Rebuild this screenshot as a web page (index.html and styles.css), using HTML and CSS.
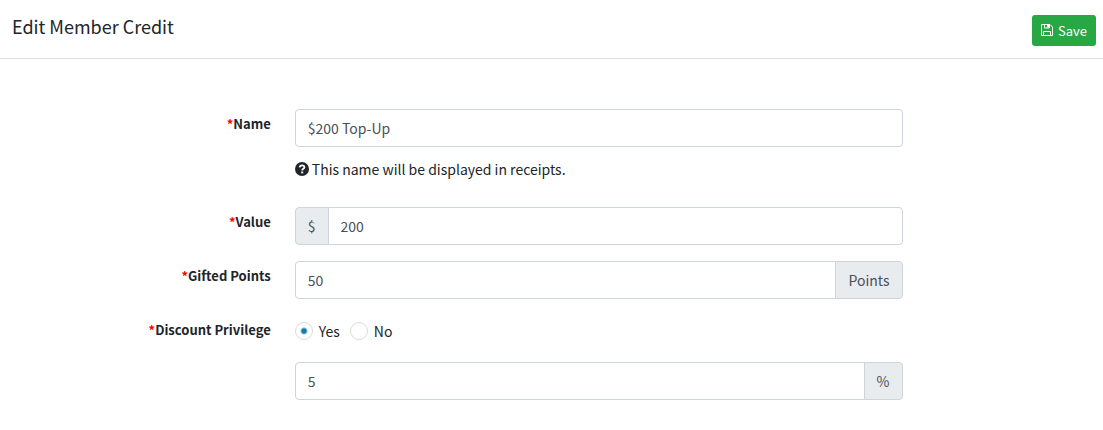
FILE: index.html
```
<!DOCTYPE html>
<html lang="en">
  <head>
    <meta charset="UTF-8" />
    <meta name="viewport" content="width=device-width, initial-scale=1.0" />
    <title>Edit Member Credit</title>
    <link rel="stylesheet" href="styles.css">
  </head>
  <body>
    <header class="page-header">
      <h1>Edit Member Credit</h1>
      <button class="btn-save" type="submit" form="creditForm">
        <svg class="icon" viewBox="0 0 14 14" aria-hidden="true">
          <path d="M1.500 1.500h8.500l2.500 2.500v8.500h-11zM4.500 1.500v3.500h5v-3.500M3.500 12.500v-4h7v4" fill="none" stroke="currentColor" />
          <path d="M7 2h2v2.500h-2z" fill="currentColor" />
        </svg>
        Save
      </button>
    </header>
    <form id="creditForm" class="credit-form">
      <div class="form-row">
        <label class="form-label" for="name"><span class="required">*</span>Name</label>
        <div class="field">
          <input class="form-control" type="text" id="name" value="$200 Top-Up" />
          <p class="help">
            <svg class="icon" viewBox="0 0 14 14" aria-hidden="true">
              <circle cx="7" cy="7" r="7" fill="currentColor" />
              <path d="M4.700 5.300C4.900 3.900 5.800 3.300 7 3.300c1.400 0 2.400.8 2.400 1.900 0 1.600-2.200 1.600-2.200 3.200" fill="none" stroke="#fff" stroke-width="1.800" />
              <path d="M6.200 9.500h2v1.900h-2z" fill="#fff" />
            </svg>
            This name will be displayed in receipts.
          </p>
        </div>
      </div>
      <div class="form-row">
        <label class="form-label" for="value"><span class="required">*</span>Value</label>
        <div class="field input-group">
          <span class="addon">$</span>
          <input class="form-control" type="text" id="value" value="200" />
        </div>
      </div>
      <div class="form-row">
        <label class="form-label" for="points"><span class="required">*</span>Gifted Points</label>
        <div class="field input-group">
          <input class="form-control" type="text" id="points" value="50" />
          <span class="addon">Points</span>
        </div>
      </div>
      <div class="form-row" role="radiogroup" aria-labelledby="privilegeLabel">
        <label class="form-label" id="privilegeLabel" for="percent"><span class="required">*</span>Discount Privilege</label>
        <div class="field">
          <div class="radios">
            <input type="radio" id="yes" name="privilege" checked />
            <label for="yes">Yes</label>
            <input type="radio" id="no" name="privilege" />
            <label for="no">No</label>
          </div>
          <div class="input-group">
            <input class="form-control" type="text" id="percent" value="5" />
            <span class="addon">%</span>
          </div>
        </div>
      </div>
    </form>
  </body>
</html>
```

FILE: styles.css
```
* {
  box-sizing: border-box;
}
body {
  margin: 0;
  font-family: "Source Sans Pro", "Noto Sans CJK SC", sans-serif;
  font-size: 14px;
  line-height: 24px;
  color: #212529;
  background-color: #fff;
}
.page-header {
  display: flex;
  justify-content: space-between;
  align-items: flex-start;
  padding: 15px 7px 12px 12px;
  border-bottom: 1px solid #dee2e6;
}
h1 {
  margin: 0;
  font-size: 18px;
  font-weight: 400;
  line-height: 22px;
}
.icon {
  width: 14px;
  height: 14px;
  flex: none;
}
.btn-save {
  display: flex;
  align-items: center;
  gap: 4px;
  height: 31px;
  padding: 0 9px 1px 8px;
  border: none;
  border-radius: 3px;
  background-color: #28a745;
  color: #fff;
  font-family: inherit;
  font-size: 13px;
  cursor: pointer;
}
.btn-save:hover {
  background-color: #218838;
}
.credit-form {
  padding: 50px 8px 0 12px;
}
.form-row {
  display: grid;
  grid-template-columns: 3fr 7fr 2fr;
  margin-bottom: 16px;
}
.form-label {
  padding: 3px 12px;
  text-align: right;
  font-size: 13px;
  font-weight: 700;
}
.required {
  color: #f00;
}
.field {
  margin: 0 12px;
}
.form-control {
  display: block;
  width: 100%;
  min-width: 0;
  height: 38px;
  padding: 0 12px;
  border: 1px solid #ced4da;
  border-radius: 4px;
  background-color: #fff;
  color: #495057;
  font-family: inherit;
  font-size: 14px;
}
.help {
  display: flex;
  align-items: center;
  gap: 3px;
  margin: 10px 0;
}
.input-group {
  display: flex;
}
.input-group .form-control {
  flex: 1;
}
.addon {
  display: flex;
  align-items: center;
  padding: 0 12px;
  border: 1px solid #ced4da;
  border-radius: 4px;
  background-color: #e9ecef;
  color: #495057;
}
.input-group > :first-child {
  border-top-right-radius: 0;
  border-bottom-right-radius: 0;
}
.input-group > :last-child {
  margin-left: -1px;
  border-top-left-radius: 0;
  border-bottom-left-radius: 0;
}
.radios {
  display: flex;
  align-items: center;
  margin: 4px 0 19px;
}
.radios label {
  margin: 0 10px 0 6px;
}
.radios input {
  appearance: none;
  width: 18px;
  height: 18px;
  margin: 0;
  border: 1px solid #dcdcdc;
  border-radius: 50%;
  background-color: #fff;
}
.radios input:checked {
  background-image: radial-gradient(circle, #1678ab 2px, transparent 4px);
}
```
